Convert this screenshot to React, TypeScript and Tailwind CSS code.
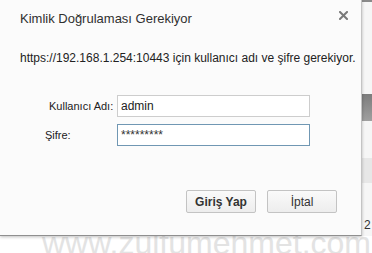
import React from "react";

function CloseIcon() {
  return (
    <svg width="9" height="9" viewBox="0 0 9 9" className="block">
      <path d="M1 1 L8 8 M8 1 L1 8" stroke="#7a7a7a" strokeWidth="2" strokeLinecap="square" />
    </svg>
  );
}

export default function App() {
  return (
    <div
      className="relative w-[372px] h-[253px] overflow-hidden bg-white"
      style={{ fontFamily: '"Liberation Sans", Arial, sans-serif' }}
    >
      {/* page behind the dialog */}
      <div className="absolute inset-0 flex justify-end">
        <div className="w-[11px] h-[236px] flex flex-col bg-[#f6f6f6] border-l border-[#dcdcdc]">
          <div className="h-[2px] bg-[#8a8a8a]" />
          <div className="h-[92px]" />
          <div className="h-[27px] bg-gradient-to-b from-[#7c7c7c] to-[#a0a0a0]" />
          <div className="h-[37px]" />
          <div className="h-[25px] bg-[#e7e7e7]" />
          <div className="flex-1 flex items-end pb-[5px] pl-[2px] text-[12px] leading-none text-[#333]">
            2
          </div>
        </div>
      </div>

      {/* watermark */}
      <div className="absolute left-[42px] top-[227px] text-[32px] leading-[32px] text-[#e3e3e3] whitespace-nowrap">
        www.zulfumehmet.com
      </div>

      {/* dialog */}
      <div className="absolute left-0 top-0 w-[362px] h-[236px] bg-[#fbfbfb] border-r border-b border-r-[#c4c4c4] border-b-[#8f8f8f] shadow-[0_1px_3px_rgba(0,0,0,0.25)] flex flex-col">
        <div className="flex items-start justify-between pl-[20px] pr-[13px] pt-[11px]">
          <h1 className="text-[13px] leading-[16px] text-[#303030] font-normal">
            Kimlik Doğrulaması Gerekiyor
          </h1>
          <CloseIcon />
        </div>

        <p className="mt-[24px] pl-[20px] text-[12px] leading-[15px] text-[#222] whitespace-nowrap">
          https://192.168.1.254:10443 için kullanıcı adı ve şifre gerekiyor.
        </p>

        <div className="mt-[29px] grid grid-cols-[72px_193px] gap-y-[7px] pl-[45px] text-[11px] text-[#222]">
          <label className="pl-[4px] flex items-center">Kullanıcı Adı:</label>
          <input
            readOnly
            value="admin"
            className="h-[22px] w-[193px] border border-[#cdcdcd] bg-white px-[3px] text-[12px] text-[#222] outline-none"
          />
          <label className="flex items-center">Şifre:</label>
          <input
            readOnly
            value="*********"
            className="h-[22px] w-[193px] border border-[#7097b3] bg-white px-[3px] text-[12px] text-[#333] outline-none"
          />
        </div>

        <div className="mt-auto mb-[22px] flex justify-end gap-[11px] pr-[24px]">
          <button className="w-[70px] h-[23px] rounded-[2px] border border-[#c3c3c3] bg-gradient-to-b from-[#fafafa] to-[#ededed] text-[12px] font-bold text-[#333]">
            Giriş Yap
          </button>
          <button className="w-[70px] h-[23px] rounded-[2px] border border-[#c3c3c3] bg-gradient-to-b from-[#fafafa] to-[#ededed] text-[12px] text-[#333]">
            İptal
          </button>
        </div>
      </div>
    </div>
  );
}
